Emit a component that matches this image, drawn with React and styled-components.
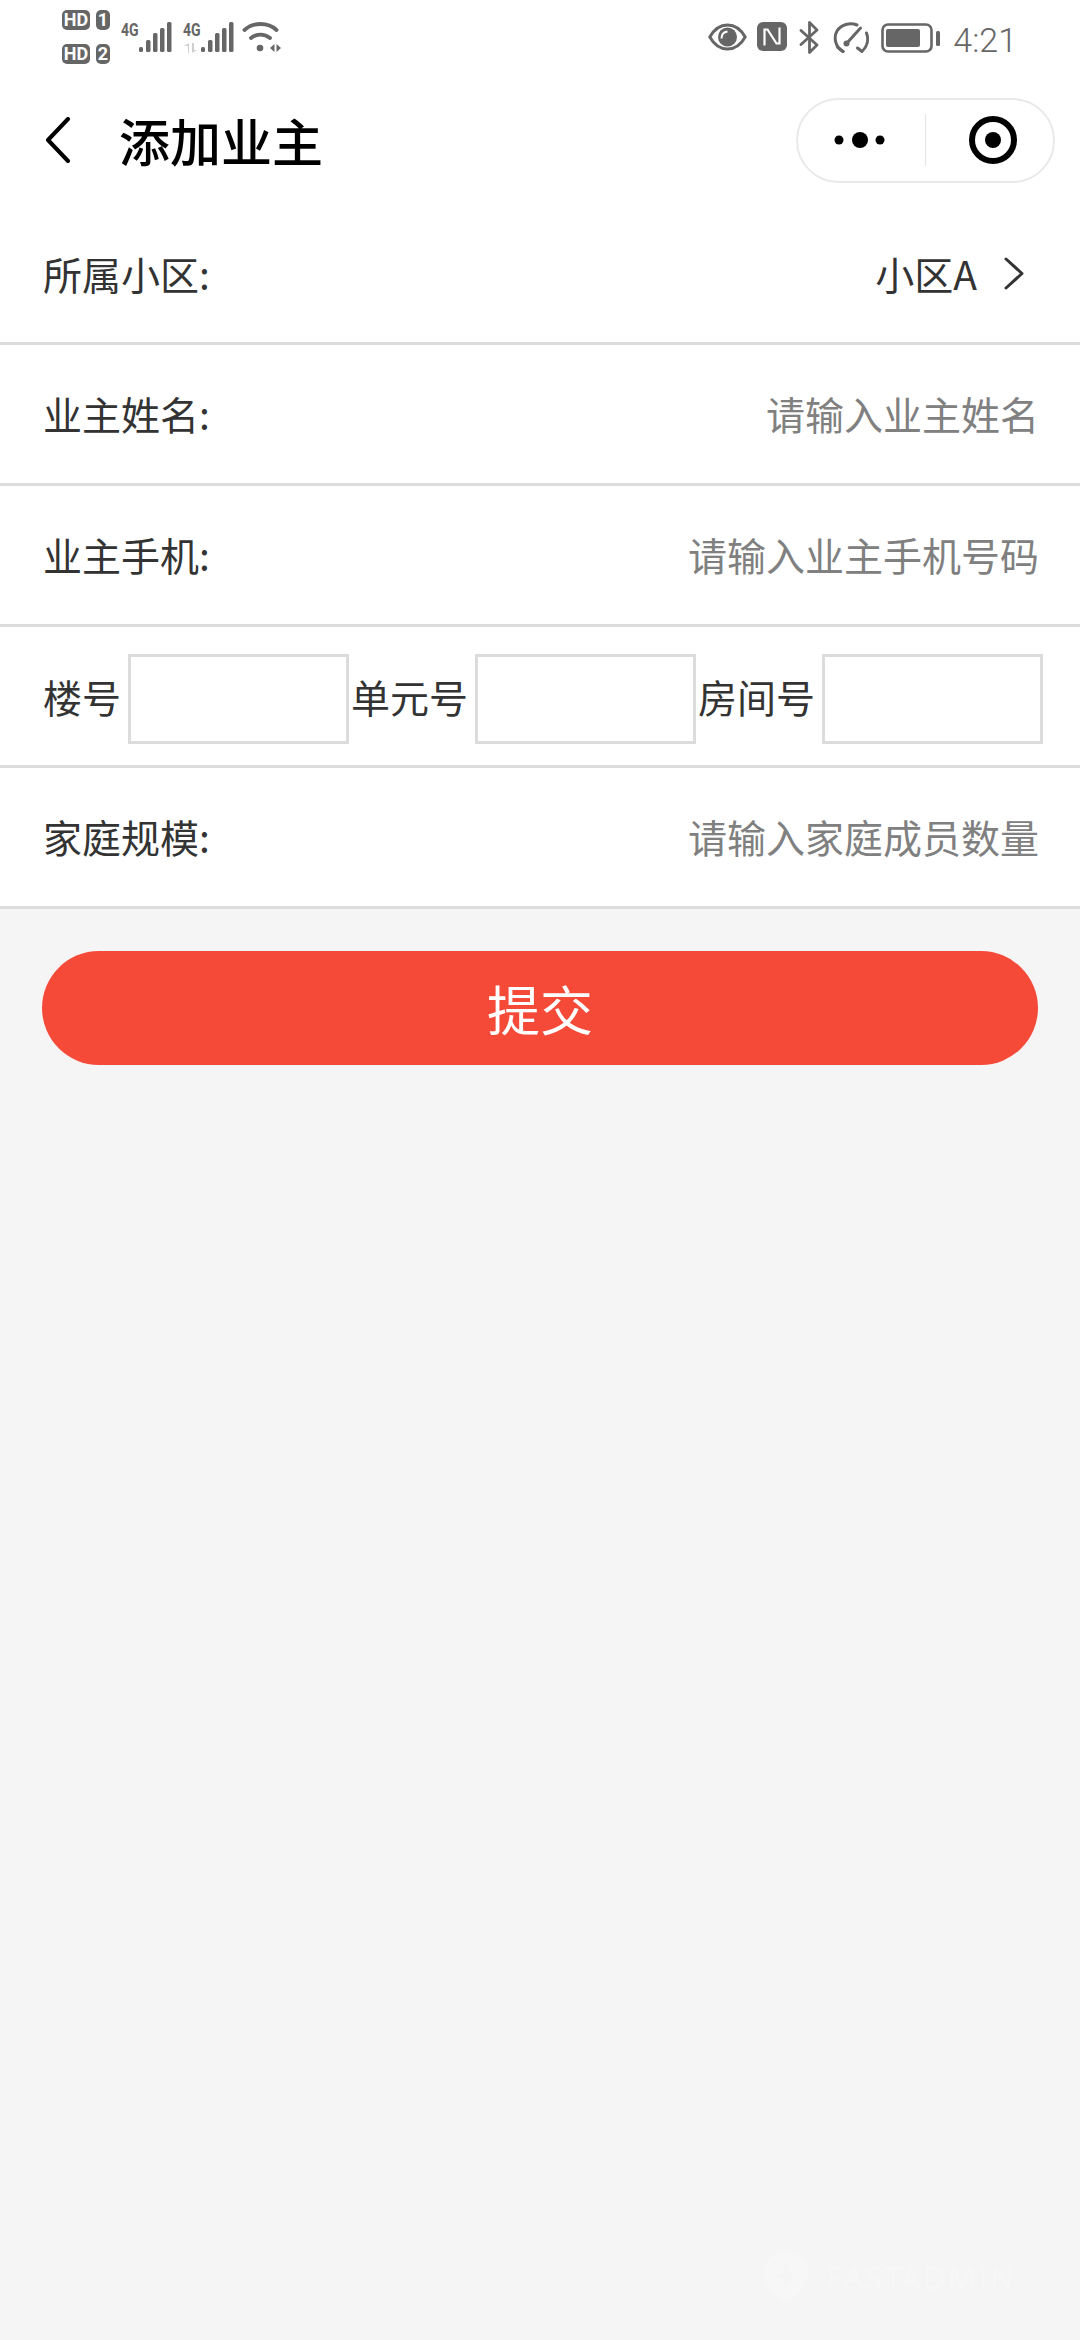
import React from 'react'
import styled, { createGlobalStyle } from 'styled-components'

const GlobalStyle = createGlobalStyle`
  html, body {
    margin: 0;
    padding: 0;
    background: #f5f5f5;
  }
  * {
    box-sizing: border-box;
  }
`

const Page = styled.div`
  position: relative;
  width: 1080px;
  height: 2340px;
  background: #f5f5f5;
  font-family: "Noto Sans CJK SC", "Noto Sans", sans-serif;
  color: #333;
  overflow: hidden;
`

const Top = styled.div`
  background: #fff;
`

const StatusBar = styled.div`
  height: 76px;
  display: flex;
  justify-content: space-between;
  padding: 10px 63px 0 62px;
  color: #666;
`

const StatusGroup = styled.div`
  display: flex;
  align-items: flex-start;
`

const SimStack = styled.div`
  display: flex;
  flex-direction: column;
  gap: 14px;
`

const SimRow = styled.div`
  display: flex;
  gap: 6px;
`

const Badge = styled.span`
  height: 20px;
  width: ${(p) => p.$w}px;
  background: #666;
  color: #fff;
  border-radius: 5px;
  font: 700 18px/20px "Roboto", sans-serif;
  text-align: center;
`

const Signal = styled.div`
  display: flex;
  align-items: flex-start;
  margin-left: ${(p) => p.$gap}px;
`

const NetColumn = styled.div`
  width: 17px;
  display: flex;
  flex-direction: column;
`

const NetLabel = styled.span`
  margin-top: 12px;
  height: 15px;
  font: 700 18px/15px "Roboto", sans-serif;
  color: #666;
  white-space: nowrap;
  transform: scaleX(0.78);
  transform-origin: left;
`

const Icon = styled.svg`
  display: block;
  flex: none;
  margin-left: ${(p) => p.$ml || 0}px;
  margin-top: ${(p) => p.$mt || 0}px;
`

const Clock = styled.span`
  margin-left: 13px;
  margin-top: 11px;
  font: 300 34px/38px "Roboto", sans-serif;
  color: #666;
`

const NavBar = styled.div`
  height: 128px;
  display: flex;
  align-items: center;
  padding: 0 25px 0 46px;
`

const Title = styled.h1`
  margin: 0 0 0 49px;
  font-size: 51px;
  font-weight: 500;
  line-height: 60px;
  color: #000;
  flex: 1;
`

const Capsule = styled.div`
  width: 259px;
  height: 85px;
  border: 2px solid #e9e9e9;
  border-radius: 43px;
  display: flex;
  align-items: center;
  padding-left: 35px;
`

const Divider = styled.div`
  width: 1px;
  height: 52px;
  background: #e4e4e4;
  margin-left: 40px;
`

const Row = styled.div`
  height: 141px;
  display: flex;
  align-items: center;
  justify-content: ${(p) => p.$start ? 'flex-start' : 'space-between'};
  padding: 0 41px ${(p) => p.$lift || 0}px 43px;
  background: #fff;
  border-bottom: 3px solid #dcdcdc;
  font-size: 39px;
`

const Label = styled.span`
  flex: none;
  color: #333;
`

const Field = styled.input`
  flex: 1;
  min-width: 0;
  border: none;
  outline: none;
  padding: 0;
  background: transparent;
  text-align: right;
  font: inherit;
  color: #333;

  &::placeholder {
    color: #808080;
    opacity: 1;
  }
`

const Value = styled.div`
  display: flex;
  align-items: center;
  gap: 27px;
  margin-right: 15px;
  color: #333;
`

const AddressItem = styled.div`
  flex: none;
  display: flex;
  align-items: center;
  gap: 7px;
  margin-right: 2px;
`

const BoxInput = styled.input`
  width: 221px;
  height: 90px;
  margin-top: 6px;
  border: 3px solid #dcdcdc;
  background: #fff;
  outline: none;
  padding: 0 8px;
  font: inherit;
`

const SubmitButton = styled.button`
  display: block;
  width: 996px;
  height: 114px;
  margin: 42px 0 0 42px;
  border: none;
  border-radius: 57px;
  background: #f64a39;
  color: #fff;
  font-family: inherit;
  font-size: 53px;
  font-weight: 400;
`

const Watermark = styled.div`
  position: absolute;
  left: 763px;
  top: 2250px;
  display: flex;
  align-items: center;
  gap: 17px;
  color: #f7f7f7;
  font: 400 31px/36px "Noto Sans", sans-serif;
  letter-spacing: 2px;
`

const Sim = ({ n }) => (
  <SimRow>
    <Badge $w={28}>HD</Badge>
    <Badge $w={14}>{n}</Badge>
  </SimRow>
)

const Bars = () => (
  <Icon width="34" height="30" viewBox="0 0 34 30" $mt={12} fill="#666">
    <rect x="1" y="25" width="4" height="5" rx="1.5" />
    <rect x="8" y="18" width="4.5" height="12" rx="1.5" />
    <rect x="15" y="11" width="4.5" height="19" rx="1.5" />
    <rect x="22" y="6" width="4.5" height="24" rx="1.5" />
    <rect x="29" y="0" width="4.5" height="30" rx="1.5" />
  </Icon>
)

const App = () => {
  return (
    <Page>
      <GlobalStyle />
      <Top>
        <StatusBar>
          <StatusGroup>
            <SimStack>
              <Sim n="1" />
              <Sim n="2" />
            </SimStack>
            <Signal $gap={11}>
              <NetColumn>
                <NetLabel>4G</NetLabel>
              </NetColumn>
              <Bars />
            </Signal>
            <Signal $gap={11}>
              <NetColumn>
                <NetLabel>4G</NetLabel>
                <Icon width="16" height="10" viewBox="0 0 16 10" $mt={6} fill="#cfcfcf">
                  <path d="M5 10V3H1l5-3v10zM9 0v10l5-3h-3V0z" />
                </Icon>
              </NetColumn>
              <Bars />
            </Signal>
            <Icon width="40" height="32" viewBox="0 0 40 32" $ml={8} $mt={12} fill="none" stroke="#666" strokeLinecap="round">
              <path d="M2.5 8C11 0 26 0 34.500 8" strokeWidth="3.800" />
              <path d="M9 16c5.500-4.500 13.500-4.500 19 0" strokeWidth="3.800" />
              <circle cx="18" cy="26" r="3.300" fill="#666" stroke="none" />
              <path d="M32.500 22l-4.500 4 4.500 4zM34.500 22l4.500 4-4.500 4z" fill="#666" stroke="none" />
            </Icon>
          </StatusGroup>
          <StatusGroup>
            <Icon width="39" height="28" viewBox="0 0 39 28" $mt={13} fill="none" stroke="#666">
              <path d="M1.800 14C6 6.500 12.500 2 19.500 2S33 6.500 37.200 14C33 21.500 26.500 26 19.500 26S6 21.500 1.800 14z" strokeWidth="3" />
              <circle cx="19.500" cy="14" r="9.500" fill="#666" stroke="none" />
              <path d="M13.500 15.500c0-4 2.500-6.500 6-7" fill="none" stroke="#fff" strokeWidth="2" />
            </Icon>
            <Icon width="30" height="29" viewBox="0 0 30 29" $ml={10} $mt={12}>
              <rect width="30" height="29" rx="6" fill="#666" />
              <path d="M7.500 23.500V7.500h3l9 14M22.500 5.500v16h-3l-9-14" fill="none" stroke="#fff" strokeWidth="2.200" />
            </Icon>
            <Icon width="21" height="33" viewBox="0 0 21 33" $ml={12} $mt={11} fill="none" stroke="#666" strokeWidth="2.800" strokeLinecap="round" strokeLinejoin="round">
              <path d="M2 9.500l16 14.500-7.500 7.500V1.500L18 9 2 23.500" />
            </Icon>
            <Icon width="36" height="31" viewBox="0 0 36 31" $ml={13} $mt={12} fill="none" stroke="#666" strokeWidth="3" strokeLinecap="round" strokeLinejoin="round">
              <path d="M10 29.500C2 25 .5 15 4 9 8 2.500 17 0 24 3" />
              <path d="M4.500 25l5.500 4.500" />
              <path d="M33.500 11c2.500 7 .5 14-4.500 18.500l-4.500-3.500" />
              <path d="M14 21L27.500 6" />
              <circle cx="13.500" cy="21.500" r="3" fill="#666" stroke="none" />
            </Icon>
            <Icon width="59" height="30" viewBox="0 0 59 30" $ml={12} $mt={13}>
              <rect x="1.500" y="1.500" width="49" height="27" rx="5.500" fill="none" stroke="#666" strokeWidth="2.600" />
              <rect x="5" y="6" width="34" height="18" rx="2" fill="#666" />
              <rect x="55" y="8" width="4" height="15" rx="1.500" fill="#666" />
            </Icon>
            <Clock>4:21</Clock>
          </StatusGroup>
        </StatusBar>
        <NavBar>
          <Icon width="24" height="46" viewBox="0 0 24 46" fill="none" stroke="#000" strokeWidth="4" strokeLinecap="round" strokeLinejoin="round">
            <path d="M22 2L2 23l20 21" />
          </Icon>
          <Title>添加业主</Title>
          <Capsule>
            <Icon width="52" height="18" viewBox="0 0 52 18" fill="#000">
              <circle cx="6" cy="9" r="4.500" />
              <circle cx="27" cy="9" r="8" />
              <circle cx="47" cy="9" r="4.500" />
            </Icon>
            <Divider />
            <Icon width="48" height="48" viewBox="0 0 48 48" $ml={43}>
              <circle cx="24" cy="24" r="21" fill="none" stroke="#000" strokeWidth="6" />
              <circle cx="24" cy="24" r="8" fill="#000" />
            </Icon>
          </Capsule>
        </NavBar>
      </Top>

      <Row>
        <Label>所属小区:</Label>
        <Value>
          小区A
          <Icon width="20" height="33" viewBox="0 0 20 33" fill="none" stroke="#333" strokeWidth="3" strokeLinecap="round" strokeLinejoin="round">
            <path d="M2 2l16 14.500L2 31" />
          </Icon>
        </Value>
      </Row>
      <Row $lift={3}>
        <Label>业主姓名:</Label>
        <Field placeholder="请输入业主姓名" />
      </Row>
      <Row $lift={3}>
        <Label>业主手机:</Label>
        <Field placeholder="请输入业主手机号码" />
      </Row>
      <Row $start>
        {['楼号', '单元号', '房间号'].map((name) => (
          <AddressItem key={name}>
            <Label>{name}</Label>
            <BoxInput />
          </AddressItem>
        ))}
      </Row>
      <Row $lift={3}>
        <Label>家庭规模:</Label>
        <Field placeholder="请输入家庭成员数量" />
      </Row>

      <SubmitButton>提交</SubmitButton>

      <Watermark>
        <Icon width="46" height="54" viewBox="0 0 46 54">
          <path d="M23 1C10 1 1 10 1 23c0 13 12 24 22 30 10-6 22-17 22-30C45 10 36 1 23 1z" fill="#f7f7f7" />
          <path d="M26 10L15 28h7l-3 14 12-19h-7z" fill="#f5f5f5" />
        </Icon>
        FASTADMIN
      </Watermark>
    </Page>
  )
}

export default App
